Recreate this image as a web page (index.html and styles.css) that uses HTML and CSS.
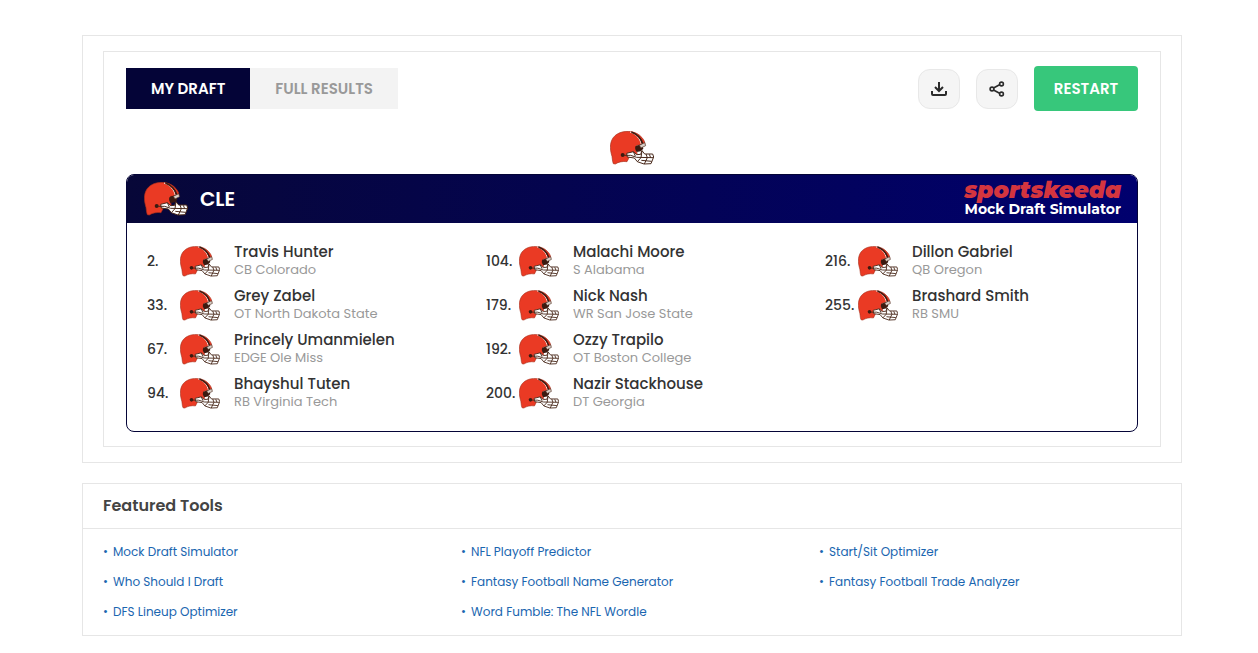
FILE: index.html
```html
<!DOCTYPE html>
<html lang="en">
<head>
    <meta charset="UTF-8">
    <meta name="viewport" content="width=device-width, initial-scale=1.0">
    <title>Mock Draft Simulator</title>
    <link rel="stylesheet" href="styles.css">
</head>
<body>
    <!-- Team helmet, reused for every pick -->
    <svg class="sprite" aria-hidden="true">
        <symbol id="helmet" viewBox="0 0 132 100">
            <path d="M10 97C6 88 8 78 4 68C-3 42 3 19 22 8C42-4 72-2 89 12C99 21 105 29 105 39L80 42C75 50 77 59 82 66L74 73L58 77L51 91C38 89 25 92 16 98Z" fill="#ea3a24" stroke="#a8301c" stroke-width="2"/>
            <path d="M60 2C79 8 90 22 94 39" fill="none" stroke="#fff" stroke-width="3"/>
            <path d="M64 2C83 9 94 22 98 38" fill="none" stroke="#3b1a10" stroke-width="5"/>
            <path d="M77 44L96 38L100 52L92 60L80 62C75 55 74 49 77 44Z" fill="#3b1a10"/>
            <circle cx="38" cy="71" r="6" fill="#3b1a10"/>
            <path d="M88 42L104 34L107 43L93 50Z" fill="#d8cfc8" stroke="#4a2a1c" stroke-width="2"/>
            <path d="M50 66L70 61L80 70L92 69L96 58L104 68L128 68L131 77L123 97L102 98L82 91L73 80L52 77Z" fill="#fff" stroke="#4a2a1c" stroke-width="3" stroke-linejoin="round"/>
            <path d="M42 72H62L80 78L129 79M70 61L76 74M82 91L93 79L96 58M103 98L112 79L108 68M94 87L125 90M118 69L122 79" fill="none" stroke="#4a2a1c" stroke-width="3"/>
        </symbol>
    </svg>

    <main class="page">
        <section class="results-box">
            <div class="results">
                <div class="toolbar">
                    <div class="tabs">
                        <button class="tab active" type="button">MY DRAFT</button>
                        <button class="tab" type="button">FULL RESULTS</button>
                    </div>
                    <div class="actions">
                        <button class="icon-btn" type="button" aria-label="Download">
                            <svg width="16" height="16" viewBox="0 0 16 16"><path d="M8 1V9M4 6L8 10L12 6M1 10V13Q1 14 2 14H14Q15 14 15 13V10"/></svg>
                        </button>
                        <button class="icon-btn" type="button" aria-label="Share">
                            <svg class="share" width="16" height="16" viewBox="0 0 16 16"><path d="M4.5 7L11 3.5M4.5 9L11 12.5"/><circle cx="3" cy="8" r="1.9"/><circle cx="12.5" cy="3" r="1.9"/><circle cx="12.5" cy="13" r="1.9"/></svg>
                        </button>
                        <button class="restart-btn" type="button">RESTART</button>
                    </div>
                </div>

                <div class="team-select">
                    <svg class="team-logo" role="img" aria-label="CLE"><use href="#helmet"/></svg>
                </div>

                <div class="draft-card">
                    <div class="draft-header">
                        <svg class="team-logo"><use href="#helmet"/></svg>
                        <h1>CLE</h1>
                        <div class="brand">
                            <span class="brand-name">sportskeeda</span>
                            <span class="brand-tool">Mock Draft Simulator</span>
                        </div>
                    </div>
                    <ul class="picks">
                        <li><span class="pick-no">2.</span><svg class="pick-logo"><use href="#helmet"/></svg><div><p class="name">Travis Hunter</p><p class="info">CB Colorado</p></div></li>
                        <li><span class="pick-no">33.</span><svg class="pick-logo"><use href="#helmet"/></svg><div><p class="name">Grey Zabel</p><p class="info">OT North Dakota State</p></div></li>
                        <li><span class="pick-no">67.</span><svg class="pick-logo"><use href="#helmet"/></svg><div><p class="name">Princely Umanmielen</p><p class="info">EDGE Ole Miss</p></div></li>
                        <li><span class="pick-no">94.</span><svg class="pick-logo"><use href="#helmet"/></svg><div><p class="name">Bhayshul Tuten</p><p class="info">RB Virginia Tech</p></div></li>
                        <li><span class="pick-no">104.</span><svg class="pick-logo"><use href="#helmet"/></svg><div><p class="name">Malachi Moore</p><p class="info">S Alabama</p></div></li>
                        <li><span class="pick-no">179.</span><svg class="pick-logo"><use href="#helmet"/></svg><div><p class="name">Nick Nash</p><p class="info">WR San Jose State</p></div></li>
                        <li><span class="pick-no">192.</span><svg class="pick-logo"><use href="#helmet"/></svg><div><p class="name">Ozzy Trapilo</p><p class="info">OT Boston College</p></div></li>
                        <li><span class="pick-no">200.</span><svg class="pick-logo"><use href="#helmet"/></svg><div><p class="name">Nazir Stackhouse</p><p class="info">DT Georgia</p></div></li>
                        <li><span class="pick-no">216.</span><svg class="pick-logo"><use href="#helmet"/></svg><div><p class="name">Dillon Gabriel</p><p class="info">QB Oregon</p></div></li>
                        <li><span class="pick-no">255.</span><svg class="pick-logo"><use href="#helmet"/></svg><div><p class="name">Brashard Smith</p><p class="info">RB SMU</p></div></li>
                    </ul>
                </div>
            </div>
        </section>

        <section class="tools">
            <h2>Featured Tools</h2>
            <ul class="tool-list">
                <li><a href="#">Mock Draft Simulator</a></li>
                <li><a href="#">NFL Playoff Predictor</a></li>
                <li><a href="#">Start/Sit Optimizer</a></li>
                <li><a href="#">Who Should I Draft</a></li>
                <li><a href="#">Fantasy Football Name Generator</a></li>
                <li><a href="#">Fantasy Football Trade Analyzer</a></li>
                <li><a href="#">DFS Lineup Optimizer</a></li>
                <li><a href="#">Word Fumble: The NFL Wordle</a></li>
            </ul>
        </section>
    </main>
</body>
</html>
```
FILE: styles.css
```css
* {
    box-sizing: border-box;
}
body {
    margin: 0;
    font-family: Poppins, Inter, sans-serif;
    background-color: #fff;
    color: #333;
}
h1, h2, p, ul {
    margin: 0;
    padding: 0;
}
ul {
    list-style: none;
}
button {
    font-family: inherit;
    border: none;
    padding: 0;
    cursor: pointer;
}
.sprite {
    display: none;
}
.page {
    padding: 35px 76px 16px 82px;
}
.results-box {
    border: 1px solid #e6e6e6;
    padding: 15px 20px;
}
.results {
    border: 1px solid #e6e6e6;
    padding: 14px 22px;
}
.toolbar {
    display: flex;
    justify-content: space-between;
    align-items: center;
}
.tabs {
    display: flex;
    background-color: #f3f3f3;
}
.tab {
    height: 41px;
    padding: 0 25px;
    font-size: 15px;
    font-weight: 600;
    color: #999;
    background-color: #f3f3f3;
}
.tab.active {
    color: #fff;
    background-color: #040437;
}
.actions {
    display: flex;
    align-items: center;
    gap: 16px;
}
.icon-btn {
    display: flex;
    align-items: center;
    justify-content: center;
    width: 42px;
    height: 40px;
    background-color: #f5f5f5;
    border: 1px solid #e8e8e8;
    border-radius: 12px;
}
.icon-btn svg {
    fill: none;
    stroke: #2b2b2b;
    stroke-width: 2;
}
.icon-btn .share {
    stroke-width: 1.6;
}
.restart-btn {
    width: 104px;
    height: 45px;
    font-size: 15px;
    font-weight: 600;
    color: #fff;
    background-color: #37c77b;
    border-radius: 4px;
}
.team-select {
    display: flex;
    justify-content: center;
    padding: 20px 0 9px;
}
.team-logo {
    width: 44px;
    height: 34px;
}
.draft-card {
    border: 1px solid #040437;
    border-radius: 8px;
    overflow: hidden;
}
.draft-header {
    display: flex;
    align-items: center;
    gap: 12px;
    height: 48px;
    padding: 0 16px 0 17px;
    color: #fff;
    background: linear-gradient(90deg, #070738, #00006e);
}
.draft-header h1 {
    font-size: 20px;
    line-height: 24px;
    font-weight: 600;
}
.brand {
    display: flex;
    flex-direction: column;
    align-items: flex-end;
    margin-left: auto;
    font-family: Montserrat, Poppins, sans-serif;
}
.brand-name {
    font-size: 23px;
    line-height: 20px;
    font-weight: 900;
    font-style: italic;
    color: #d4353f;
}
.brand-tool {
    font-size: 14px;
    line-height: 18px;
    font-weight: 700;
}
.picks {
    display: grid;
    grid-template-rows: repeat(4, 44px);
    grid-template-columns: repeat(3, 1fr);
    grid-auto-flow: column;
    column-gap: 47px;
    padding: 16px 20px;
}
.picks li {
    display: flex;
    align-items: center;
}
.pick-no {
    width: 33px;
    font-size: 14px;
    font-weight: 500;
}
.pick-logo {
    width: 40px;
    height: 31px;
    margin-right: 14px;
}
.name {
    font-size: 15px;
    line-height: 18px;
    font-weight: 500;
}
.info {
    font-size: 13px;
    line-height: 18px;
    color: #999;
}
.tools {
    margin-top: 20px;
    border: 1px solid #e6e6e6;
}
.tools h2 {
    padding: 0 20px;
    font-size: 16px;
    line-height: 44px;
    font-weight: 600;
    color: #444;
    border-bottom: 1px solid #e6e6e6;
}
.tool-list {
    display: grid;
    grid-template-columns: repeat(3, 1fr);
    column-gap: 16px;
    padding: 8px 20px;
}
.tool-list li {
    display: flex;
    font-size: 12px;
    line-height: 30px;
    color: #1a66b0;
}
.tool-list li::before {
    content: "•";
    width: 10px;
}
.tool-list a {
    color: #1a66b0;
    text-decoration: none;
}
```
